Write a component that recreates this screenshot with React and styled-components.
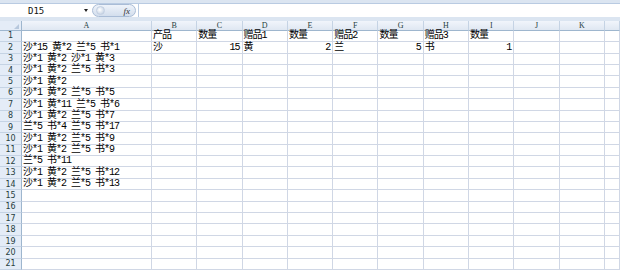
import React from 'react';
import { styled, createGlobalStyle } from 'styled-components';

const GlobalStyle = createGlobalStyle`
    body {
        margin: 0;
        background: #ffffff;
        font-family: "Noto Sans CJK SC", "Liberation Sans", sans-serif;
    }
`;

const Window = styled.div`
    width: 620px;
    height: 270px;
    overflow: hidden;
    display: flex;
    flex-direction: column;
    background: #dbe5f1;
`;

const FormulaBar = styled.div`
    display: flex;
    align-items: center;
    height: 15px;
    margin-top: 3px;
    border-top: 1px solid #b9cbe2;
    background: #ffffff;
`;

const NameBox = styled.div`
    width: 92px;
    height: 100%;
    display: flex;
    align-items: center;
    justify-content: space-between;
    padding: 0 4px 0 28px;
    box-sizing: border-box;
    font-family: "DejaVu Sans Mono", "Liberation Mono", monospace;
    font-size: 9px;
    color: #111;
`;

const Arrow = styled.span`
    width: 0;
    height: 0;
    border-left: 2.5px solid transparent;
    border-right: 2.5px solid transparent;
    border-top: 3px solid #222;
`;

const Pill = styled.div`
    width: 44px;
    height: 13px;
    border-radius: 7px;
    border: 1px solid #a9bcd6;
    background: linear-gradient(#eef3fa, #d3deed);
    display: flex;
    align-items: center;
    justify-content: space-between;
    padding: 0 5px 0 3px;
    box-sizing: border-box;
`;

const Knob = styled.span`
    width: 7px;
    height: 7px;
    border-radius: 50%;
    background: radial-gradient(circle at 40% 40%, #ffffff, #b8c8dd);
    border: 1px solid #c3d0e2;
`;

const Fx = styled.span`
    font-family: "Liberation Serif", serif;
    font-style: italic;
    font-size: 9px;
    color: #333;
`;

const Input = styled.div`
    flex: 1;
    height: 100%;
    margin-left: 2px;
    border-left: 1px solid #b9cbe2;
    background: #ffffff;
`;

const Gap = styled.div`
    height: 4px;
    background: #dbe5f1;
`;

const Grid = styled.div`
    display: grid;
    grid-template-columns: 22px 130px repeat(10, 45.3px) 1fr;
    grid-template-rows: 10px repeat(21, 11.4px);
    background: #ffffff;
    flex: 1;
`;

const Corner = styled.div`
    position: relative;
    background: #e4ecf7;
    border-right: 1px solid #9eb6ce;
    border-bottom: 1px solid #9eb6ce;
    box-sizing: border-box;
    &::after {
        content: '';
        position: absolute;
        right: 2px;
        bottom: 1px;
        border-left: 5px solid transparent;
        border-bottom: 5px solid #b7c8dd;
    }
`;

const ColHead = styled.div`
    display: flex;
    align-items: center;
    justify-content: center;
    background: linear-gradient(#f1f5fb, #dfe7f2);
    border-right: 1px solid #c5d3e4;
    border-bottom: 1px solid #9eb6ce;
    box-sizing: border-box;
    font-family: "Liberation Serif", serif;
    font-size: 8px;
    color: #27413e;
`;

const RowHead = styled.div`
    display: flex;
    align-items: center;
    justify-content: center;
    background: #e4ecf7;
    border-right: 1px solid #9eb6ce;
    border-bottom: 1px solid #c5d3e4;
    box-sizing: border-box;
    font-family: "DejaVu Sans", sans-serif;
    font-size: 8px;
    color: #27413e;
`;

const Cell = styled.div`
    display: flex;
    align-items: flex-end;
    justify-content: ${(p) => (p.$num ? 'flex-end' : 'flex-start')};
    padding: 0 2px 0 1px;
    border-right: 1px solid #d0d7e5;
    border-bottom: 1px solid #d0d7e5;
    box-sizing: border-box;
    font-family: "Liberation Mono", "Noto Sans CJK SC", monospace;
    font-size: 10px;
    letter-spacing: -1px;
    line-height: 11px;
    color: #000;
    white-space: pre;
    overflow: visible;
`;

const columns = ['A', 'B', 'C', 'D', 'E', 'F', 'G', 'H', 'I', 'J', 'K', ''];

const colA = [
    '',
    '沙*15 黄*2 兰*5 书*1',
    '沙*1 黄*2 沙*1 黄*3',
    '沙*1 黄*2 兰*5 书*3',
    '沙*1 黄*2',
    '沙*1 黄*2 兰*5 书*5',
    '沙*1 黄*11 兰*5 书*6',
    '沙*1 黄*2 兰*5 书*7',
    '兰*5 书*4 兰*5 书*17',
    '沙*1 黄*2 兰*5 书*9',
    '沙*1 黄*2 兰*5 书*9',
    '兰*5 书*11',
    '沙*1 黄*2 兰*5 书*12',
    '沙*1 黄*2 兰*5 书*13',
];

const rowsBK = {
    1: ['产品', '数量', '赠品1', '数量', '赠品2', '数量', '赠品3', '数量', '', ''],
    2: ['沙', 15, '黄', 2, '兰', 5, '书', 1, '', ''],
};

export default function App() {
    const rows = [];
    for (let r = 1; r <= 21; r++) {
        const rest = rowsBK[r] || Array(10).fill('');
        rows.push(
            <React.Fragment key={r}>
                <RowHead>{r}</RowHead>
                <Cell>{colA[r - 1] || ''}</Cell>
                {rest.map((v, i) => (
                    <Cell key={i} $num={typeof v === 'number'}>
                        {v}
                    </Cell>
                ))}
                <Cell />
            </React.Fragment>
        );
    }

    return (
        <>
            <GlobalStyle />
            <Window>
                <FormulaBar>
                    <NameBox>
                        D15
                        <Arrow />
                    </NameBox>
                    <Pill>
                        <Knob />
                        <Fx>fx</Fx>
                    </Pill>
                    <Input />
                </FormulaBar>
                <Gap />
                <Grid>
                    <Corner />
                    {columns.map((c, i) => (
                        <ColHead key={i}>{c}</ColHead>
                    ))}
                    {rows}
                </Grid>
            </Window>
        </>
    );
}
